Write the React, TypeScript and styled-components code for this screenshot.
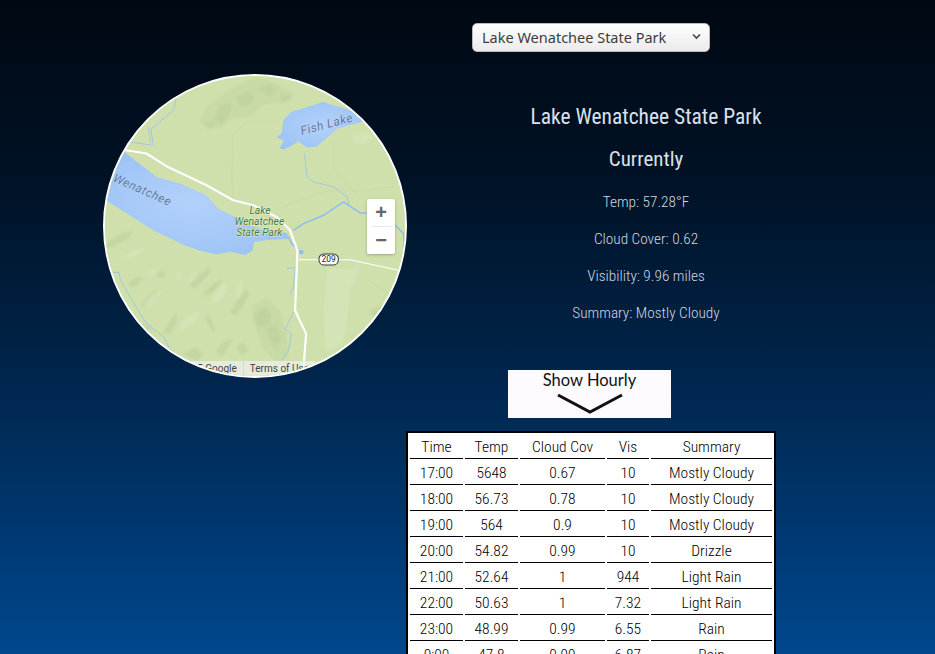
import React from "react";
import styled, { createGlobalStyle } from "styled-components";

const Global = createGlobalStyle`
  html, body { margin: 0; padding: 0; height: 654px; overflow: hidden; }
  body { background: linear-gradient(180deg, #000812 0%, #001226 28%, #00244a 56%, #00478e 100%); font-family: "Roboto", sans-serif; font-stretch: 75%; }
  #root { height: 654px; overflow: hidden; }
`;

const Page = styled.div`
  display: grid;
  grid-template-columns: 406px 370px;
  height: 654px;
`;
const MapColumn = styled.div`
  padding: 74px 0 0 103px;
`;
const MapCircle = styled.div`
  position: relative;
  width: 304px;
  height: 304px;
  box-sizing: border-box;
  border: 2px solid #fff;
  border-radius: 50%;
  overflow: hidden;
  background: #cfe0ac;
`;
const MapSvg = styled.svg`
  display: block;
  width: 100%;
  height: 100%;
  font-stretch: 100%;
`;
const ZoomBox = styled.div`
  position: absolute;
  left: 262px;
  top: 123px;
  width: 28px;
  height: 55px;
  background: #fff;
  border-radius: 2px;
  box-shadow: 0 1px 3px rgba(0,0,0,.25);
  display: flex;
  flex-direction: column;
  align-items: center;
`;
const ZoomBtn = styled.div`
  height: 27px;
  width: 28px;
  display: flex;
  align-items: center;
  justify-content: center;
  color: #666;
  font: bold 20px "Liberation Sans", sans-serif;
`;
const ZoomSep = styled.div`
  width: 19px;
  height: 1px;
  background: #e6e6e6;
`;
const Attribution = styled.div`
  position: absolute;
  right: 90px;
  top: 285px;
  display: flex;
  gap: 1px;
  height: 15px;
  font: 10px/15px "Roboto", sans-serif;
  color: #444;
  white-space: nowrap;
`;
const AttrItem = styled.span`
  background: rgba(240,240,240,.7);
  padding: 0 6px;
`;
const Right = styled.div`
  display: flex;
  flex-direction: column;
  align-items: stretch;
`;
const SelectBox = styled.div`
  box-sizing: border-box;
  width: 238px;
  height: 29px;
  margin: 23px 0 0 66px;
  padding: 0 8px 2px 9px;
  display: flex;
  align-items: center;
  justify-content: space-between;
  border: 1px solid #b9b9b9;
  border-radius: 5px;
  background: linear-gradient(#fff, #eceaea);
  color: #3c3c3c;
  font: 14.5px "Noto Sans", sans-serif;
`;
const Summary = styled.div`
  margin: 52px 0 0 65px;
  width: 350px;
  color: #d8e2ee;
  text-align: center;
`;
const Place = styled.h2`
  margin: 0;
  font-size: 21.5px;
  line-height: 26px;
  font-weight: 400;
`;
const Now = styled.h3`
  margin: 16px 0 21px;
  font-size: 21px;
  line-height: 26px;
  font-weight: 400;
`;
const Stat = styled.p`
  margin: 0 0 18px;
  font-size: 15.3px;
  line-height: 19px;
  font-weight: 350;
  color: #ced8e4;
`;
const HourlyBtn = styled.div`
  box-sizing: border-box;
  width: 163px;
  height: 48px;
  margin: 29px 0 0 102px;
  background: #fdfbff;
  display: flex;
  flex-direction: column;
  align-items: center;
  color: #111;
  font: 16.5px/20px "Lato", sans-serif;
  font-stretch: normal;
`;
const Arrow = styled.svg`
  margin-top: 2px;
`;
const Table = styled.table`
  margin-top: 13px;
  width: 370px;
  box-sizing: border-box;
  background: #fff;
  border: 2px solid #000;
  border-spacing: 2px;
  table-layout: fixed;
  color: #000;
  font-size: 15.5px;
  font-weight: 350;
`;
const Th = styled.th`
  font-weight: 350;
  height: 23px;
  padding: 0;
  border-bottom: 1px solid #000;
  text-align: center;
`;
const Td = styled.td`
  height: 23px;
  padding: 0;
  border-bottom: 1px solid #000;
  text-align: center;
`;

const rows = [
  ["17:00", "5648", "0.67", "10", "Mostly Cloudy"],
  ["18:00", "56.73", "0.78", "10", "Mostly Cloudy"],
  ["19:00", "564", "0.9", "10", "Mostly Cloudy"],
  ["20:00", "54.82", "0.99", "10", "Drizzle"],
  ["21:00", "52.64", "1", "944", "Light Rain"],
  ["22:00", "50.63", "1", "7.32", "Light Rain"],
  ["23:00", "48.99", "0.99", "6.55", "Rain"],
  ["0:00", "47.8", "0.99", "6.87", "Rain"],
];

const paleRidges = [
  "M330 190l20-50 40-30 50-35 60-25 60 20 50 30-30 25-60 10-40 35-50 5-40 30z",
  "M480 740l50-30 40 40 20 70 5 70-30 20-50-50-20-70z",
  "M710 60l70 30-40 20-40-20z",
];
const darkRidges = [
  "M375 180l15-40 25-15 10 15-12 30-18 20z",
  "M340 190l25-5 12 15-20 8z",
  "M440 110l35-15 20 15-15 25-30 5z",
  "M505 85l30-12 25 20-20 15z",
  "M570 110l30-5 5 15-30 8z",
  "M50 545l45-25 35-8-8 18-50 28-22 8z",
  "M115 668l25-18 20 2-18 22-20 4z",
  "M155 735l30-38 25-8-12 20-26 32z",
  "M300 672l30-30 25-20 8 10-30 35-22 18z",
  "M335 705l35-35 28-15-10 22-30 25z",
  "M420 755l22-35 28-35 8 15-18 35-25 30z",
  "M350 760l15 20 12 35-12-5-15-30z",
  "M220 820l15-30 22-32 6 20-20 40z",
  "M380 872l15-25 35-10-15 22-20 30z",
  "M490 770l35-30 20 25-15 30-25 5z",
  "M530 800l30-5 15 40-20 25-20-30z",
  "M130 800l40-10 20 15-30 10z",
  "M840 750l40-20 10 15-40 25z",
  "M280 880l35-20 25 20-20 20z",
  "M200 640l20-10 8 15-20 10z",
  "M440 860l20-15 15 25-20 15z",
];
const lightRidges = [
  "M100 590l30-22 35-5-12 15-35 18z",
  "M175 635l22-10 5 12-20 8z",
  "M255 660l12-28 8 2-6 26z",
  "M295 660l15-25 12-5-4 20-15 15z",
  "M160 737l25-35 35-18-12 25-28 32z",
  "M360 730l15-40 30-30 5 35-25 30z",
  "M430 712l10-30 18-22 4 22-15 28z",
  "M265 805l25-35 40-20-8 30-35 25z",
  "M710 625h100l-30 60-10 110-15 55-50 25-5-130z",
  "M790 225l40-12 25 15-35 25-30-5z",
];

const MapArt = () => (
  <MapSvg viewBox="46 48 898 898">
    <defs>
      <radialGradient id="lake" cx="0.5" cy="0.5" r="0.6">
        <stop offset="0" stopColor="#b3d1fb" />
        <stop offset="1" stopColor="#9cc3f5" />
      </radialGradient>
      <filter id="soft" x="-10%" y="-10%" width="120%" height="120%">
        <feGaussianBlur stdDeviation="3" />
      </filter>
    </defs>
    <rect x="0" y="0" width="990" height="990" fill="#cfe0ac" />
    <g fill="#c8daa6" filter="url(#soft)">
      {paleRidges.map((d) => <path key={d} d={d} />)}
    </g>
    <g fill="#bcd09c" filter="url(#soft)" opacity=".6">
      {darkRidges.map((d) => <path key={d} d={d} />)}
    </g>
    <g fill="#d9e6be" filter="url(#soft)" opacity=".6">
      {lightRidges.map((d) => <path key={d} d={d} />)}
    </g>
    <path fill="url(#lake)" d="M560 232l15-12 5-40 25-25 50-15 45-15 20 8 35 10 50 15 35 22-50 12-50 15-35 30-25 22-30 3-25-18-25 15-18 8-13-2 12-25z" />
    <path fill="url(#lake)" d="M100 272L200 350 270 370 350 405 385 445 420 462 470 490 520 510 590 518 600 535 540 538 492 545 488 570 465 584 420 574 380 582 330 570 285 555 190 510 120 465 45 418 20 350z" />
    <g fill="none" stroke="#8fbcf2" strokeWidth="2">
      <path d="M258 118l-5 30-70 60 8 50M175 200l8 50M120 245l65 10" />
      <path d="M643 280l8 70 20 15 60 15 40 30 5 25" />
      <path d="M610 510l30-20 60-25 60-40 50 33h20l85 37 25 25 2 50" strokeWidth="4.5" />
      <path d="M595 530l10 20 20 15" strokeWidth="4" />
      <path d="M590 625l25-5-5 60-10 20" />
      <path d="M610 755l-25 50 20 15-10 50-20 30" />
      <path d="M70 636h18l5 25 50 85 25 40 55 45 15 30 40 50M160 790l-8 12" />
    </g>
    <g fill="none" stroke="#c4d6a2" strokeWidth="2">
      <path d="M570 185H470l-40 40-5 120 5 70" />
      <path d="M580 440l60-25 80-25 60 0 60 0 60-10" />
      <path d="M730 240v90l70 70" />
      <path d="M830 660l70 40" />
    </g>
    <path fill="#8fbcf2" d="M628 567l14 5-6 10-10-2z" />
    <g fill="none" stroke="#fff" strokeLinejoin="round">
      <path d="M95 268L170 280 230 318 350 375 430 420 490 435 560 470 600 510 622 570 615 750 648 820 638 950" strokeWidth="6.5" />
      <path d="M625 598h155l150 33" strokeWidth="3.5" />
    </g>
    <rect x="685" y="579" width="61" height="36" rx="16" fill="#333" />
    <rect x="688" y="582" width="55" height="30" rx="13" fill="#fff" />
    <text x="715.5" y="605" fontFamily="Roboto, sans-serif" fontSize="25" textAnchor="middle" fill="#222">209</text>
    <g fontFamily="Roboto, sans-serif" fontStyle="italic" fontSize="36" fill="#5f7a9a" paintOrder="stroke" stroke="#c4dbfa" strokeWidth="2">
      <text x="635" y="225" transform="rotate(-15 635 225)" letterSpacing="1.5">Fish Lake</text>
      <text x="68" y="362" transform="rotate(24 68 362)" letterSpacing="1.5">Wenatchee</text>
    </g>
    <g fontFamily="Roboto, sans-serif" fontStyle="italic" fontSize="31" fill="#457a3a" textAnchor="middle" paintOrder="stroke" stroke="#e6efd6" strokeWidth="3">
      <text x="510" y="460">Lake</text>
      <text x="508" y="493">Wenatchee</text>
      <text x="508" y="526">State Park</text>
    </g>
  </MapSvg>
);

export default function App() {
  return (
    <Page>
      <Global />
      <MapColumn>
        <MapCircle>
          <MapArt />
          <ZoomBox>
            <ZoomBtn>+</ZoomBtn>
            <ZoomSep />
            <ZoomBtn>−</ZoomBtn>
          </ZoomBox>
          <Attribution>
            <AttrItem>Map data ©2015 Google</AttrItem>
            <AttrItem>Terms of Use</AttrItem>
          </Attribution>
        </MapCircle>
      </MapColumn>
      <Right>
        <SelectBox>
          <span>Lake Wenatchee State Park</span>
          <svg width="9" height="7" viewBox="0 0 9 7" fill="none" stroke="#444" strokeWidth="1.6"><path d="M1 1.5l3.5 3.5 3.5-3.5" /></svg>
        </SelectBox>
        <Summary>
          <Place>Lake Wenatchee State Park</Place>
          <Now>Currently</Now>
          <Stat>Temp: 57.28°F</Stat>
          <Stat>Cloud Cover: 0.62</Stat>
          <Stat>Visibility: 9.96 miles</Stat>
          <Stat>Summary: Mostly Cloudy</Stat>
        </Summary>
        <HourlyBtn>
          Show Hourly
          <Arrow width="68" height="22" viewBox="0 0 68 22" fill="none" stroke="#111" strokeWidth="3"><path d="M2 3l32 17 32-17" /></Arrow>
        </HourlyBtn>
        <Table>
          <colgroup>
            <col style={{ width: 53 }} />
            <col style={{ width: 53 }} />
            <col style={{ width: 85 }} />
            <col style={{ width: 42 }} />
            <col style={{ width: 121 }} />
          </colgroup>
          <thead>
            <tr>
              {["Time", "Temp", "Cloud Cov", "Vis", "Summary"].map((h) => <Th key={h}>{h}</Th>)}
            </tr>
          </thead>
          <tbody>
            {rows.map((r) => (
              <tr key={r[0]}>
                {r.map((c, i) => <Td key={i}>{c}</Td>)}
              </tr>
            ))}
          </tbody>
        </Table>
      </Right>
    </Page>
  );
}
